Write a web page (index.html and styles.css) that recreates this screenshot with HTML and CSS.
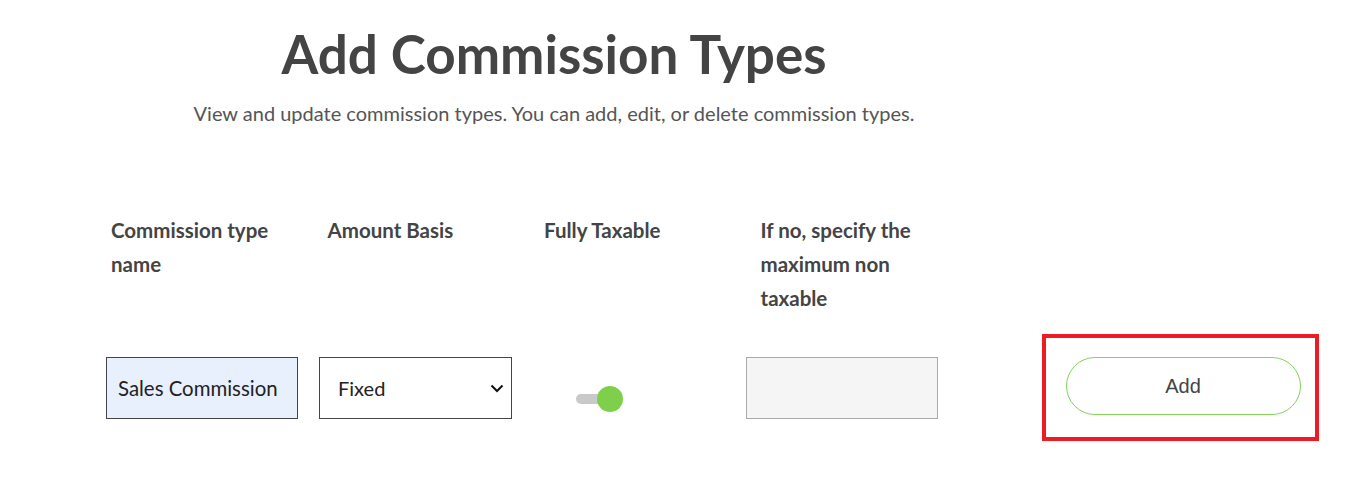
FILE: index.html
```html
<!DOCTYPE html>
<html lang="en">
<head>
<meta charset="utf-8">
<title>Add Commission Types</title>
<link rel="stylesheet" href="styles.css">
</head>
<body>
<main class="page">
  <header class="intro">
    <h1 class="title">Add Commission Types</h1>
    <p class="subtitle">View and update commission types. You can add, edit, or delete commission types.</p>
  </header>
  <div class="labels">
    <div class="label">Commission type name</div>
    <div class="label">Amount Basis</div>
    <div class="label">Fully Taxable</div>
    <div class="label">If no, specify the maximum non taxable</div>
  </div>
  <div class="fields">
    <div class="cell"><input class="text-input filled" type="text" value="Sales Commission"></div>
    <div class="cell">
      <div class="select-wrap">
        <select class="select"><option>Fixed</option></select>
        <svg class="chevron" width="14" height="9" viewBox="0 0 14 9"><path d="M1.5 1.5 L7 7 L12.5 1.5" fill="none" stroke="#111" stroke-width="2"/></svg>
      </div>
    </div>
    <div class="cell toggle-cell">
      <span class="toggle"><span class="track"></span><span class="knob"></span></span>
    </div>
    <div class="cell"><input class="text-input disabled" type="text" disabled></div>
    <div class="cell action-cell">
      <div class="highlight"><button class="add-btn" type="button">Add</button></div>
    </div>
  </div>
</main>
</body>
</html>
```
FILE: styles.css
```css
* { box-sizing: border-box; }
html, body { margin: 0; padding: 0; background: #fff; }
body { font-family: Lato, "Open Sans", sans-serif; color: #444; }

.page { width: 1364px; }

.intro { width: 1108px; text-align: center; padding-top: 22px; }
.title { margin: 0; font-size: 53px; line-height: 64px; font-weight: 700; color: #444; letter-spacing: 0; }
.subtitle { margin: 15px 0 0; font-size: 20px; line-height: 24px; color: #555; font-weight: 400; }

.labels { display: grid; grid-template-columns: repeat(4, 216.5px); padding-left: 111px; margin-top: 88px; }
.label { width: 170px; font-size: 20.5px; line-height: 34px; font-weight: 700; color: #444; }

.fields { display: grid; grid-template-columns: 213px 213.5px 213.5px 213.5px 1fr; padding-left: 106px; margin-top: 42px; align-items: start; }
.cell { height: 62px; }

.text-input { display: block; width: 192px; height: 62px; border: 1px solid #444; padding: 0 11px; font-family: inherit; font-size: 20.4px; color: #222; outline: none; }
.text-input.filled { background: #e8f0fe; }
.text-input.disabled { background: #f5f5f5; border-color: #aaa; }

.select-wrap { position: relative; width: 193px; height: 62px; }
.select { appearance: none; -webkit-appearance: none; display: block; width: 100%; height: 62px; border: 1px solid #444; background: #fff; padding: 0 18px; font-family: inherit; font-size: 20px; color: #222; border-radius: 0; outline: none; }
.chevron { position: absolute; right: 8px; top: 27px; pointer-events: none; }

.toggle-cell { display: flex; padding-left: 43px; padding-top: 29px; }
.toggle { position: relative; display: block; width: 48px; height: 26px; }
.track { position: absolute; left: 0; top: 8px; width: 30px; height: 10px; border-radius: 5px; background: #c9c9c9; }
.knob { position: absolute; left: 21px; top: 0; width: 26px; height: 26px; border-radius: 50%; background: #7ed04b; }

.action-cell { height: auto; }
.highlight { margin-left: 82px; margin-top: -23px; width: 277px; height: 107px; border: 4px solid #ed1c24; padding: 19px 0 0 20px; }
.add-btn { display: block; width: 235px; height: 58px; border: 1px solid #82d35c; border-radius: 29px; background: #fff; font-family: "Liberation Sans", Arial, sans-serif; font-size: 20px; color: #444; cursor: pointer; }
```
